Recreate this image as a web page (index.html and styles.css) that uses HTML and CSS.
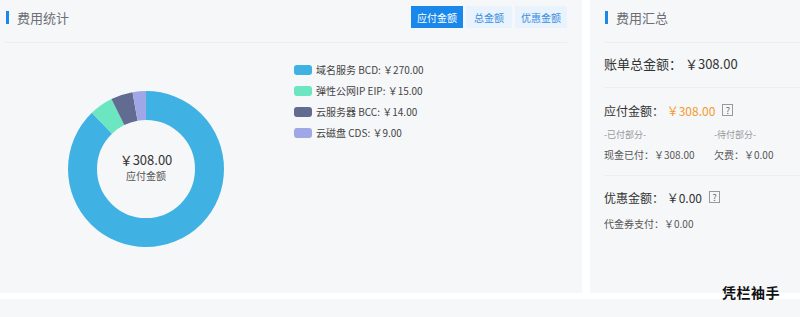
FILE: index.html
```html
<!DOCTYPE html>
<html lang="zh-CN">
<head>
    <meta charset="UTF-8">
    <meta name="viewport" content="width=device-width, initial-scale=1.0">
    <title>费用统计</title>
    <link rel="stylesheet" href="styles.css">
</head>
<body>
    <div class="page">
        <div class="top-row">
            <section class="panel stats">
                <div class="panel-head">
                    <h2 class="panel-title">费用统计</h2>
                    <div class="tabs">
                        <button class="tab active">应付金额</button>
                        <button class="tab">总金额</button>
                        <button class="tab">优惠金额</button>
                    </div>
                </div>
                <div class="chart-body">
                    <div class="donut">
                        <svg width="156" height="156" viewBox="0 0 156 156">
                            <g transform="rotate(-90 78 78)" fill="none" stroke-width="29">
                                <circle cx="78" cy="78" r="63.5" stroke="#3fb1e3" stroke-dasharray="349.75 398.98" stroke-dashoffset="0"></circle>
                                <circle cx="78" cy="78" r="63.5" stroke="#6be6c1" stroke-dasharray="19.43 398.98" stroke-dashoffset="-349.75"></circle>
                                <circle cx="78" cy="78" r="63.5" stroke="#626c91" stroke-dasharray="18.14 398.98" stroke-dashoffset="-369.18"></circle>
                                <circle cx="78" cy="78" r="63.5" stroke="#a0a7e6" stroke-dasharray="11.66 398.98" stroke-dashoffset="-387.32"></circle>
                            </g>
                        </svg>
                        <div class="donut-label">
                            <div class="donut-value">￥308.00</div>
                            <div class="donut-name">应付金额</div>
                        </div>
                    </div>
                    <ul class="legend">
                        <li><span class="swatch c1"></span>域名服务 BCD: ￥270.00</li>
                        <li><span class="swatch c2"></span>弹性公网IP EIP: ￥15.00</li>
                        <li><span class="swatch c3"></span>云服务器 BCC: ￥14.00</li>
                        <li><span class="swatch c4"></span>云磁盘 CDS: ￥9.00</li>
                    </ul>
                </div>
            </section>
            <section class="panel summary">
                <div class="panel-head">
                    <h2 class="panel-title">费用汇总</h2>
                </div>
                <div class="total-row">账单总金额：&nbsp;￥308.00</div>
                <div class="block">
                    <div class="block-title">应付金额：&nbsp;<span class="orange">￥308.00</span><span class="help">?</span></div>
                    <div class="cols">
                        <div class="col">
                            <div class="col-label">-已付部分-</div>
                            <div class="col-value">现金已付：￥308.00</div>
                        </div>
                        <div class="col">
                            <div class="col-label">-待付部分-</div>
                            <div class="col-value">欠费：￥0.00</div>
                        </div>
                    </div>
                </div>
                <div class="block last">
                    <div class="block-title">优惠金额：&nbsp;￥0.00<span class="help">?</span></div>
                    <div class="col-value">代金券支付：￥0.00</div>
                </div>
            </section>
        </div>
        <section class="panel bottom"></section>
        <div class="watermark">凭栏袖手</div>
    </div>
</body>
</html>
```

FILE: styles.css
```css
* {
    box-sizing: border-box;
}
body {
    margin: 0;
    background-color: #fff;
    font-family: "Noto Sans CJK SC", "Noto Sans", sans-serif;
    color: #333;
    overflow: hidden;
}
.page {
    position: relative;
    width: 800px;
    height: 317px;
}
.top-row {
    display: flex;
    gap: 8px;
    height: 293px;
}
.panel {
    background-color: #f6f7f9;
}
.stats {
    width: 582px;
    flex: none;
}
.summary {
    flex: 1;
    padding-left: 14px;
    overflow: hidden;
}
.bottom {
    margin-top: 6px;
    height: 18px;
}
.panel-head {
    display: flex;
    align-items: center;
    justify-content: space-between;
    height: 43px;
    padding: 6px 0 14px;
    border-bottom: 1px solid #eceef1;
}
.stats .panel-head {
    margin: 0 15px 0 4px;
}
.panel-title {
    margin: 0;
    padding-left: 8px;
    border-left: 3px solid #1a88ea;
    font-size: 13px;
    font-weight: normal;
    line-height: 13px;
    color: #6b6e74;
}
.stats .panel-title {
    margin-left: 2px;
}
.summary .panel-title {
    margin-left: 1px;
}
.tabs {
    display: flex;
    gap: 3px;
}
.tab {
    height: 22px;
    min-width: 46px;
    padding: 0 6px;
    border: none;
    background-color: #e8f3fd;
    color: #3b8de0;
    font-family: inherit;
    font-size: 10px;
    cursor: pointer;
}
.tab.active {
    background-color: #1a88ea;
    color: #fff;
}
.chart-body {
    display: flex;
    align-items: flex-start;
}
.donut {
    position: relative;
    width: 156px;
    height: 156px;
    margin: 48px 0 0 68px;
}
.donut svg {
    display: block;
}
.donut-label {
    position: absolute;
    top: 0;
    left: 0;
    right: 0;
    bottom: 0;
    display: flex;
    flex-direction: column;
    align-items: center;
    justify-content: center;
    padding-bottom: 4px;
}
.donut-value {
    font-size: 13px;
    line-height: 18px;
    color: #333;
}
.donut-name {
    font-size: 10px;
    line-height: 14px;
    color: #555;
}
.legend {
    list-style: none;
    margin: 16px 0 0 70px;
    padding: 0;
}
.legend li {
    display: flex;
    align-items: center;
    height: 21px;
    font-size: 10px;
    color: #444;
}
.swatch {
    width: 18px;
    height: 10px;
    border-radius: 3px;
    margin-right: 4px;
}
.c1 { background-color: #3fb1e3; }
.c2 { background-color: #6be6c1; }
.c3 { background-color: #626c91; }
.c4 { background-color: #a0a7e6; }
.total-row {
    display: flex;
    align-items: center;
    height: 45px;
    padding-bottom: 3px;
    font-size: 13px;
    color: #333;
    border-bottom: 1px solid #eceef1;
}
.block {
    padding-top: 13px;
    padding-bottom: 13px;
    border-bottom: 1px solid #eceef1;
}
.block.last {
    border-bottom: none;
    padding-top: 12px;
}
.block-title {
    display: flex;
    align-items: center;
    height: 18px;
    font-size: 12px;
    color: #333;
}
.orange {
    color: #f39a2b;
}
.help {
    display: inline-flex;
    align-items: center;
    justify-content: center;
    width: 11px;
    height: 12px;
    margin-left: 7px;
    border: 1px solid #999;
    font-size: 9px;
    color: #666;
    line-height: 1;
}
.cols {
    display: flex;
    margin-top: 9px;
}
.col {
    flex: none;
    width: 110px;
}
.col-label {
    font-size: 9px;
    line-height: 14px;
    color: #999;
}
.col-value {
    margin-top: 6px;
    font-size: 10px;
    line-height: 14px;
    color: #555;
}
.last .col-value {
    margin-top: 11px;
}
.watermark {
    position: absolute;
    left: 722px;
    top: 282px;
    font-size: 14px;
    font-weight: bold;
    color: #111;
    letter-spacing: 0.5px;
}
```
